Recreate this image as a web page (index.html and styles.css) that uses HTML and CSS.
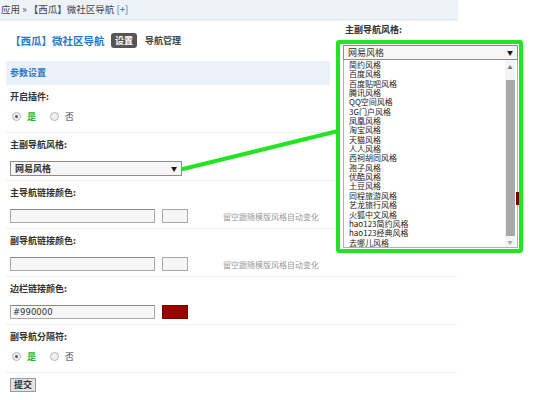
FILE: index.html
```html
<!DOCTYPE html>
<html lang="zh-CN">
<head>
  <meta charset="UTF-8" />
  <title>【西瓜】微社区导航</title>
  <link rel="stylesheet" href="styles.css">
</head>
<body>
  <div class="crumb">应用 » 【西瓜】微社区导航 <a class="plus">[+]</a></div>

  <div class="head">
    <span class="title">【西瓜】微社区导航</span>
    <span class="tab on">设置</span>
    <span class="tab">导航管理</span>
  </div>

  <div class="section">参数设置</div>

  <form class="form">
    <div class="row radio-row">
      <div class="label">开启插件:</div>
      <div class="ctrl">
        <span class="radio checked"></span><span class="yes">是</span>
        <span class="radio"></span><span class="no">否</span>
      </div>
    </div>
    <div class="row">
      <div class="label">主副导航风格:</div>
      <div class="ctrl">
        <div class="select">网易风格<span class="arrow">▼</span></div>
      </div>
    </div>
    <div class="row">
      <div class="label">主导航链接颜色:</div>
      <div class="ctrl">
        <div class="text-input"></div>
        <div class="swatch"></div>
        <span class="hint">留空跟随模版风格自动变化</span>
      </div>
    </div>
    <div class="row">
      <div class="label">副导航链接颜色:</div>
      <div class="ctrl">
        <div class="text-input"></div>
        <div class="swatch"></div>
        <span class="hint">留空跟随模版风格自动变化</span>
      </div>
    </div>
    <div class="row">
      <div class="label">边栏链接颜色:</div>
      <div class="ctrl">
        <div class="text-input">#990000</div>
        <div class="swatch red"></div>
      </div>
    </div>
    <div class="row radio-row">
      <div class="label">副导航分隔符:</div>
      <div class="ctrl">
        <span class="radio checked"></span><span class="yes">是</span>
        <span class="radio"></span><span class="no">否</span>
      </div>
    </div>
    <div class="submit"><span class="btn">提交</span></div>
  </form>

  <!-- connector from the select to the opened list -->
  <svg class="connector" width="538" height="400">
    <line x1="183" y1="169" x2="338" y2="131" stroke="#22e522" stroke-width="4" stroke-linecap="round" />
  </svg>

  <div class="callout">
    <div class="callout-label">主副导航风格:</div>
    <div class="callout-box">
      <div class="select wide">网易风格<span class="arrow">▼</span></div>
      <div class="list">
        <ul>
          <li>简约风格</li>
          <li>百度风格</li>
          <li>百度贴吧风格</li>
          <li>腾讯风格</li>
          <li>QQ空间风格</li>
          <li>3G门户风格</li>
          <li>凤凰风格</li>
          <li>淘宝风格</li>
          <li>天猫风格</li>
          <li>人人风格</li>
          <li>西祠胡同风格</li>
          <li>孢子风格</li>
          <li>优酷风格</li>
          <li>土豆风格</li>
          <li>同程旅游风格</li>
          <li>艺龙旅行风格</li>
          <li>火狐中文风格</li>
          <li>hao123简约风格</li>
          <li>hao123经典风格</li>
          <li>去哪儿风格</li>
        </ul>
        <div class="scrollbar">
          <span class="sb-up">▲</span>
          <span class="sb-thumb"></span>
          <span class="sb-down">▼</span>
        </div>
      </div>
      <span class="bleed"></span>
    </div>
  </div>
</body>
</html>
```

FILE: styles.css
```css
body {
  margin: 0;
  background: #ffffff;
  font-family: "Noto Sans CJK SC", "DejaVu Sans", sans-serif;
  font-size: 9px;
  color: #333333;
  position: relative;
  width: 538px;
  height: 400px;
  overflow: hidden;
}

.crumb {
  width: 457px;
  height: 19px;
  line-height: 18px;
  padding-left: 1px;
  background: #eef3f9;
  border-bottom: 1px solid #dfe6ee;
  box-shadow: 0 1px 2px rgba(0, 0, 0, 0.06);
  color: #444444;
  font-size: 9.5px;
}

.crumb .plus {
  color: #2a6fb5;
}

.head {
  display: flex;
  align-items: center;
  height: 38px;
  padding-left: 10px;
  margin-top: 1px;
}

.title {
  color: #2a78c6;
  font-size: 10.5px;
  font-weight: bold;
  width: 101px;
}

.tab {
  font-weight: bold;
  color: #444444;
  margin-right: 8px;
}

.tab.on {
  background: #555555;
  color: #ffffff;
  border-radius: 3px;
  padding: 2px 4px;
  line-height: 11px;
}

.section {
  margin: 2px 0 0 6px;
  width: 320px;
  height: 24px;
  line-height: 24px;
  padding-left: 4px;
  background: #eaf1f8;
  color: #2a78c6;
  font-weight: bold;
}

.form {
  margin-left: 6px;
  width: 451px;
}

.row {
  padding: 6px 0 5px 4px;
  border-bottom: 1px solid #eceff2;
}

.label {
  height: 12px;
  line-height: 12px;
  font-weight: bold;
  margin-bottom: 10px;
}

.ctrl {
  display: flex;
  align-items: center;
  height: 14px;
}

.radio-row .label {
  margin-bottom: 6px;
}

.radio-row {
  padding-bottom: 9px;
}

.radio {
  width: 7px;
  height: 7px;
  border: 1px solid #b5b5b5;
  border-radius: 50%;
  background: #f1f1f1;
  margin: 0 6px 0 2px;
  position: relative;
}

.radio.checked::after {
  content: "";
  position: absolute;
  left: 2px;
  top: 2px;
  width: 3px;
  height: 3px;
  border-radius: 50%;
  background: #555555;
}

.yes {
  color: #22b522;
  font-weight: bold;
  margin-right: 12px;
}

.no {
  color: #444444;
}

.select {
  width: 166px;
  height: 13px;
  line-height: 13px;
  border: 1px solid #8c8c8c;
  background: #f6f6f6;
  padding-left: 4px;
  position: relative;
  font-weight: bold;
  color: #333333;
}

.arrow {
  position: absolute;
  right: 4px;
  top: 0;
  font-size: 6px;
  color: #111111;
}

.text-input {
  width: 141px;
  height: 12px;
  line-height: 12px;
  border: 1px solid #a8a8a8;
  border-top-color: #888888;
  background: #f7f7f7;
  padding-left: 2px;
  font-family: "DejaVu Sans", sans-serif;
  font-size: 8.5px;
  color: #333333;
}

.swatch {
  width: 24px;
  height: 12px;
  margin-left: 7px;
  border: 1px solid #a8a8a8;
  background: #f5f5f5;
}

.swatch.red {
  background: #990000;
  border-color: #7a0000;
}

.hint {
  margin-left: 35px;
  color: #999999;
  font-size: 8px;
}

.submit {
  padding: 5px 0 0 4px;
}

.btn {
  display: inline-block;
  background: #e2e2e2;
  border: 1px solid #9a9a9a;
  padding: 0 3px;
  line-height: 12px;
  font-weight: bold;
}

.connector {
  position: absolute;
  left: 0;
  top: 0;
}

.callout {
  position: absolute;
  left: 336px;
  top: 23px;
}

.callout-label {
  margin-left: 9px;
  height: 17px;
  line-height: 13px;
  font-weight: bold;
}

.callout-box {
  width: 176px;
  height: 204px;
  border: 4px solid #22e522;
  border-radius: 3px;
  background: #ffffff;
  padding: 1px 0 0 3px;
  position: relative;
}

.callout-box .select {
  width: 169px;
  font-weight: normal;
}

.list {
  display: flex;
  width: 173px;
  height: 187px;
  border: 1px solid #b0b0b0;
  border-top: none;
  background: #ffffff;
}

.list ul {
  flex: 1;
  list-style: none;
  margin: 0;
  padding: 0 0 0 5px;
  line-height: 9.35px;
  font-size: 8px;
  color: #222222;
}

.scrollbar {
  width: 10px;
  margin-right: 2px;
  display: flex;
  flex-direction: column;
  align-items: center;
  background: #f4f4f4;
}

.sb-up,
.sb-down {
  font-size: 5px;
  color: #777777;
}

.sb-up {
  height: 16px;
  line-height: 14px;
}

.sb-down {
  height: 10px;
  line-height: 10px;
  color: #aaaaaa;
}

.sb-thumb {
  flex: 1;
  width: 9px;
  background: #a9a9a9;
  margin: 4px 0 1px;
}

.bleed {
  position: absolute;
  right: 0;
  top: 148px;
  width: 3px;
  height: 13px;
  background: #7a0000;
}
```
